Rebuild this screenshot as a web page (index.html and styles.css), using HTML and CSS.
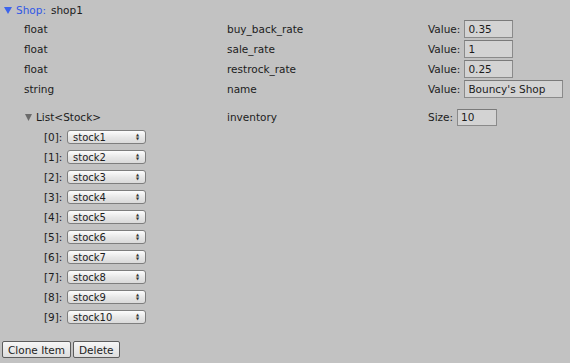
FILE: index.html
```html
<!DOCTYPE html>
<html lang="en">
<head>
    <meta charset="UTF-8">
    <title>Shop Inspector</title>
    <link rel="stylesheet" href="styles.css">
</head>
<body>
    <div class="header">
        <svg class="arrow" width="8" height="8" viewBox="0 0 8 8"><polygon points="0,1 8,1 4,8" fill="#3c64ec"/></svg>
        <span class="obj-type">Shop:</span>
        <span class="obj-name">shop1</span>
    </div>

    <div class="fields">
        <div class="field">
            <span class="ftype">float</span>
            <span class="fname">buy_back_rate</span>
            <label class="fvalue">Value: <input type="text" class="box" value="0.35"></label>
        </div>
        <div class="field">
            <span class="ftype">float</span>
            <span class="fname">sale_rate</span>
            <label class="fvalue">Value: <input type="text" class="box" value="1"></label>
        </div>
        <div class="field">
            <span class="ftype">float</span>
            <span class="fname">restrock_rate</span>
            <label class="fvalue">Value: <input type="text" class="box" value="0.25"></label>
        </div>
        <div class="field">
            <span class="ftype">string</span>
            <span class="fname">name</span>
            <label class="fvalue">Value: <input type="text" class="box wide" value="Bouncy's Shop"></label>
        </div>
    </div>

    <div class="list-field">
        <span class="ftype list-type">
            <svg class="arrow" width="7" height="7" viewBox="0 0 7 7"><polygon points="0,0 7,0 3.5,7" fill="#6b6b6b"/></svg>
            List&lt;Stock&gt;
        </span>
        <span class="fname">inventory</span>
        <label class="fvalue">Size: <input type="text" class="box small" value="10"></label>
    </div>

    <div class="items" id="items"></div>

    <div class="actions">
        <button>Clone Item</button>
        <button>Delete</button>
    </div>

    <script>
        // build the inventory rows
        const items = document.getElementById("items");
        for (let i = 0; i < 10; i++) {
            const row = document.createElement("div");
            row.className = "item";
            row.innerHTML = `<span class="idx">[${i}]:</span>` +
                `<div class="pick"><span>stock${i + 1}</span><span class="updown">&#9650;<br>&#9660;</span></div>`;
            items.appendChild(row);
        }
    </script>
</body>
</html>
```

FILE: styles.css
```css
body {
    margin: 0;
    background: #c2c2c2;
    font-family: "DejaVu Sans", sans-serif;
    font-size: 10.5px;
    color: #1c1c1c;
    width: 570px;
    height: 363px;
    overflow: hidden;
}
.header {
    height: 19px;
    display: flex;
    align-items: center;
    padding-left: 4px;
}
.header .arrow {
    margin-right: 4px;
}
.obj-type {
    color: #3158e6;
    margin-right: 5px;
}
.field, .list-field {
    display: grid;
    grid-template-columns: 203px 201px auto;
    align-items: center;
    height: 20px;
    padding-left: 24px;
}
.list-field {
    margin-top: 8px;
}
.list-type {
    display: flex;
    align-items: center;
    margin-left: 1px;
}
.list-type .arrow {
    margin-right: 4px;
}
.fvalue {
    display: flex;
    align-items: center;
}
.box {
    box-sizing: border-box;
    width: 49px;
    height: 18px;
    margin: 0 0 0 4px;
    padding: 0 3px;
    border: 1px solid #8a8a8a;
    border-top-color: #7a7a7a;
    background: #d3d3d3;
    font-family: "DejaVu Sans", sans-serif;
    font-size: 10.5px;
    color: #1c1c1c;
    outline: none;
}
.box.wide {
    width: 99px;
}
.box.small {
    width: 40px;
    height: 17px;
}
.item {
    height: 20px;
    display: flex;
    align-items: center;
    padding-left: 44px;
}
.idx {
    width: 23px;
}
.pick {
    box-sizing: border-box;
    width: 79px;
    height: 14px;
    border: 1px solid #7e7e7e;
    border-radius: 3px;
    background: linear-gradient(#fdfdfd, #e6e6e6 55%, #dadada);
    display: flex;
    align-items: center;
    justify-content: space-between;
    padding: 0 6px 0 5px;
    font-size: 10px;
}
.updown {
    font-size: 4px;
    line-height: 4px;
    color: #333;
    text-align: center;
}
.actions {
    margin-top: 14px;
    padding-left: 2px;
    display: flex;
    gap: 2px;
}
button {
    height: 17px;
    padding: 0 5px;
    border: 1px solid #5c5c5c;
    border-radius: 2px;
    background: linear-gradient(#f6f6f6, #dedede);
    font-family: "DejaVu Sans", sans-serif;
    font-size: 10.5px;
    color: #1c1c1c;
}
```
